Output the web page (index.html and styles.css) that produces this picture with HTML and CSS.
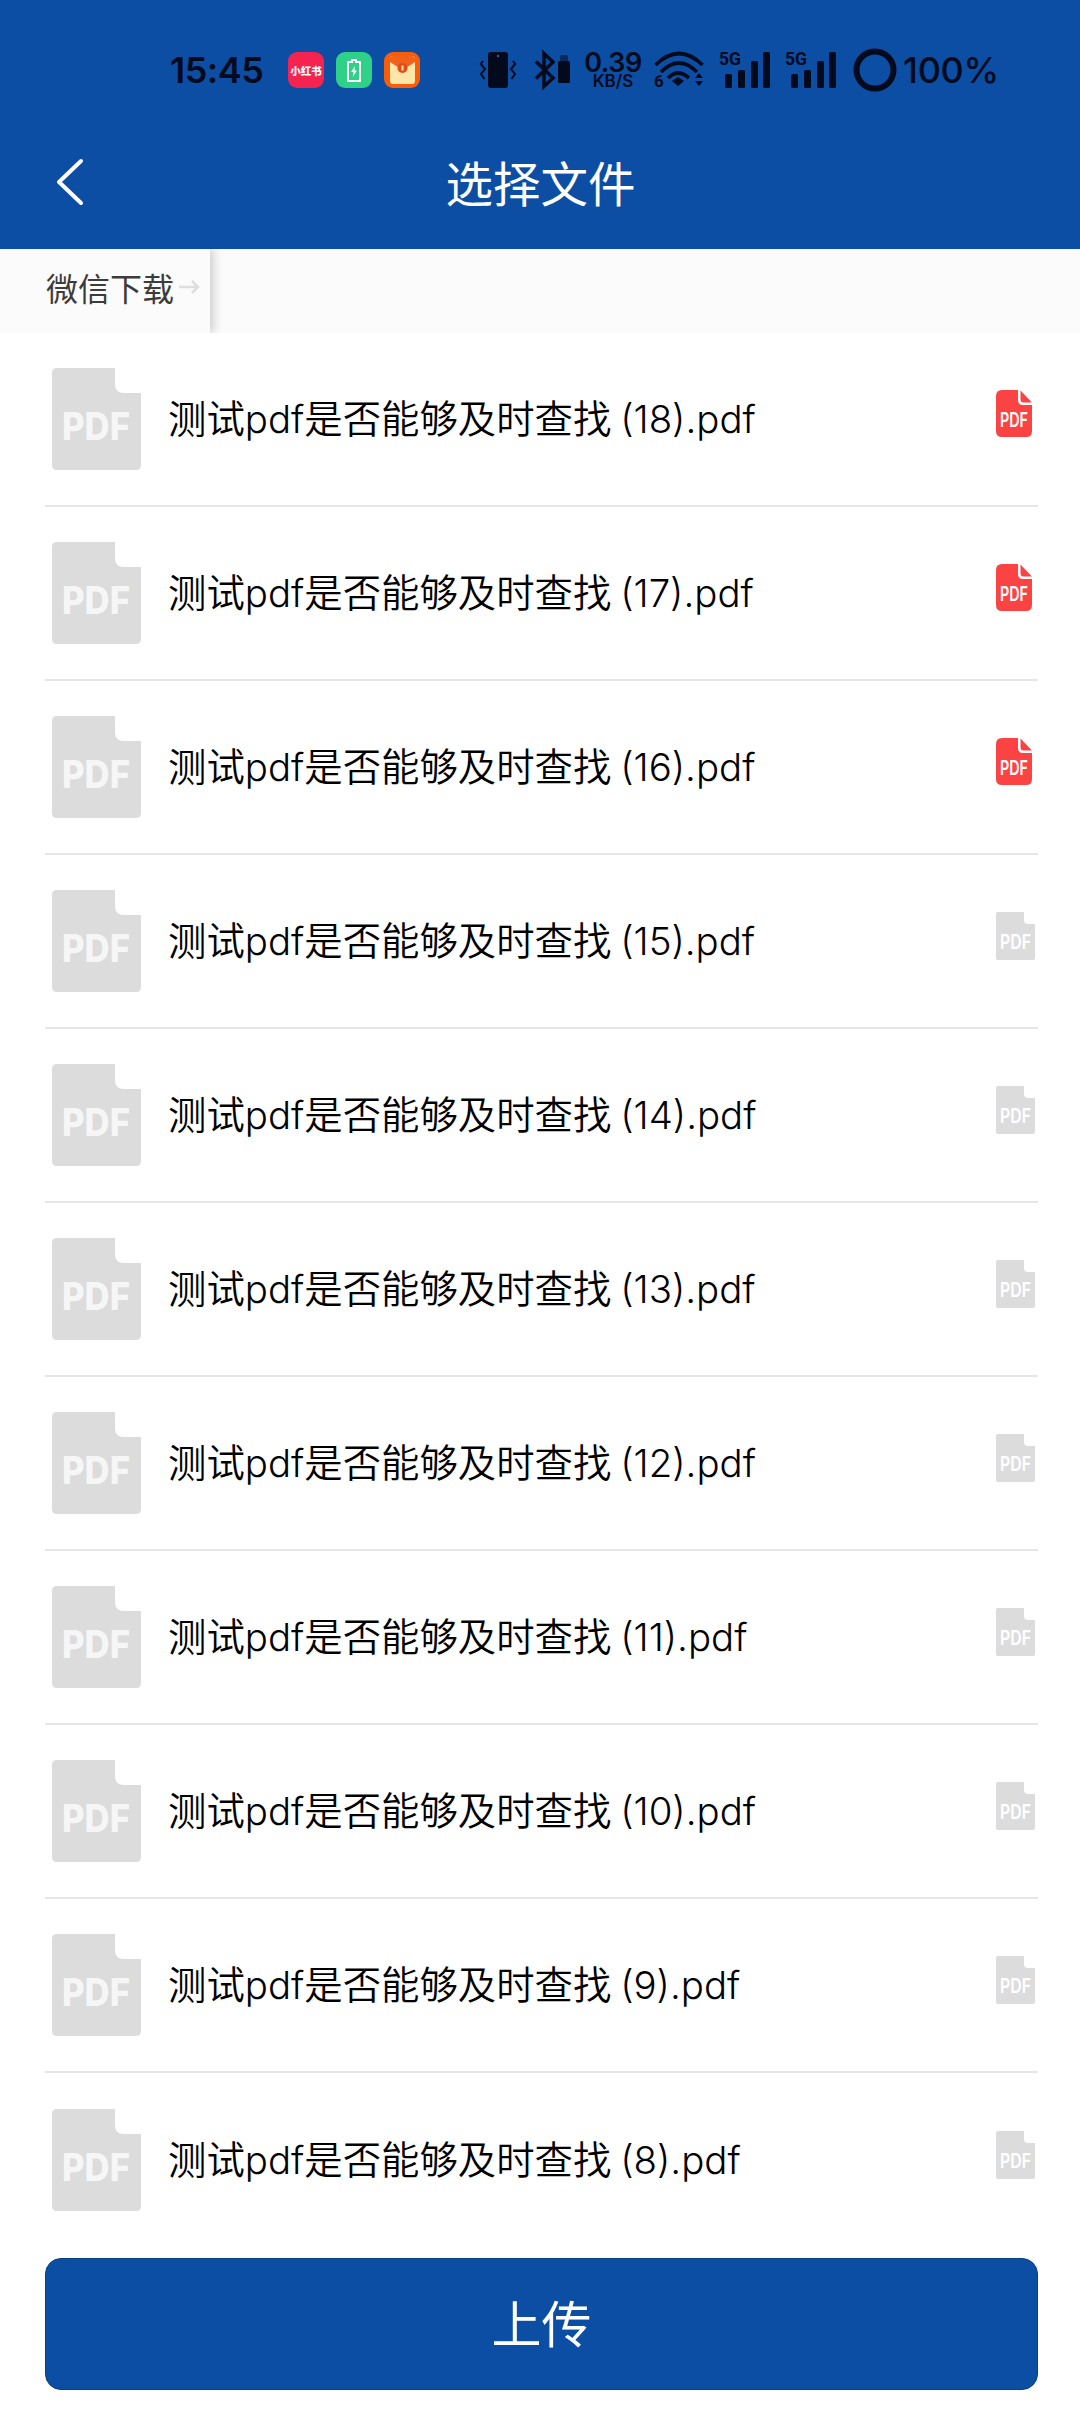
FILE: index.html
```html
<!DOCTYPE html>
<html lang="zh-CN">
<head>
<meta charset="utf-8">
<title>选择文件</title>
<link rel="stylesheet" href="styles.css">
</head>
<body>
<svg class="defs" width="0" height="0" aria-hidden="true">
  <symbol id="big-pdf" viewBox="0 0 89 102">
    <path class="grey" d="M5 0H63V16Q63 25 72 25H89V97Q89 102 84 102H5Q0 102 0 97V5Q0 0 5 0Z"/>
  </symbol>
  <symbol id="red-pdf" viewBox="0 0 39 48">
    <path class="red" d="M6 0H22V10Q22 15 27 15H36V41Q36 47 30 47H6Q0 47 0 41V6Q0 0 6 0Z"/>
    <path class="red" d="M24.500 0.500L36 12.500H27.500Q24.500 12.500 24.500 9.500Z"/>
  </symbol>
  <symbol id="grey-pdf" viewBox="0 0 39 48">
    <path class="grey" d="M2 0H28V8Q28 12 32 12H39V46Q39 48 37 48H2Q0 48 0 46V2Q0 0 2 0Z"/>
  </symbol>
  <symbol id="signal" viewBox="0 0 52 36">
    <rect x="6" y="22" width="7" height="14" rx="1.500"/>
    <rect x="19" y="18" width="7" height="18" rx="1.500"/>
    <rect x="32" y="9" width="7" height="27" rx="1.500"/>
    <rect x="44" y="0" width="7" height="36" rx="1.500"/>
  </symbol>
</svg>
<div class="screen">
  <header class="top">
    <div class="status">
      <span class="time">15:45</span>
      <div class="apps">
        <span class="app app-red">小红书</span>
        <span class="app app-green">
          <svg width="14" height="23" viewBox="0 0 14 23"><path d="M5 1H9V3H13V22H1V3H5Z" fill="none" stroke="#fff" stroke-width="2"/><path d="M8 7L4 13H6.500L5.700 18L10 11.500H7.500Z" fill="#fff"/></svg>
        </span>
        <span class="app app-orange">
          <svg width="25" height="28" viewBox="0 0 25 28"><rect width="25" height="28" rx="3" fill="#ffe6a8"/><path d="M0 3Q0 0 3 0H22Q25 0 25 3V6L12.500 14L0 6Z" fill="#f2611c"/><circle cx="12.500" cy="12" r="5" fill="#e54b17"/><rect x="11.500" y="9.500" width="2" height="5" fill="#ffe6a8"/></svg>
        </span>
      </div>
      <div class="sys">
        <svg class="ic-vib" width="36" height="36" viewBox="0 0 36 36"><rect x="8" y="0" width="20" height="36" rx="3" fill="#020a1c"/><circle cx="18" cy="4" r="1.200" fill="#3a5a90"/><path d="M3 9L0.800 12L5 17L1 22L4.500 27M33 9L35.200 12L31 17L35 22L31.500 27" fill="none" stroke="#020a1c" stroke-width="2"/></svg>
        <svg class="ic-bt" width="20" height="36" viewBox="0 0 20 36"><path d="M1 9.500L18 26L9 34.500V1.500L18 10L1 26.500" fill="none" stroke="#020a1c" stroke-width="3.500"/></svg>
        <svg class="ic-bat" width="12" height="28" viewBox="0 0 12 28"><rect x="0" y="6" width="12" height="22" rx="1.500" fill="#020a1c"/><path d="M2 6V2Q2 0 4 0H8Q10 0 10 2V6Z" fill="#0a2a5c"/></svg>
        <div class="speed"><span class="speed-num">0.39</span><span class="speed-unit">KB/S</span></div>
        <svg class="ic-wifi" width="50" height="38" viewBox="0 0 50 38">
          <path d="M1.500 14Q25 -9 48.500 14M7 21Q25 3 43 21M14 27Q24 17 35 27" fill="none" stroke="#020a1c" stroke-width="3.800"/>
          <path d="M18 30L24 26L30 30L24 35Z" fill="#020a1c"/>
          <path d="M41 27L45 22L49 27ZM41 30H49L45 35Z" fill="#020a1c"/>
          <text class="sig-txt" x="0" y="36" font-size="17">6</text>
        </svg>
        <svg class="ic-sig" width="52" height="36" viewBox="0 0 52 36">
          <use href="#signal" class="sig-bars"/>
          <text class="sig-txt" x="0" y="13" font-size="18" textLength="22" lengthAdjust="spacingAndGlyphs">5G</text>
        </svg>
        <svg class="ic-sig2" width="52" height="36" viewBox="0 0 52 36">
          <use href="#signal" class="sig-bars"/>
          <text class="sig-txt" x="0" y="13" font-size="18" textLength="22" lengthAdjust="spacingAndGlyphs">5G</text>
        </svg>
        <svg class="ic-ring" width="44" height="44" viewBox="0 0 44 44"><circle cx="22" cy="22" r="18.500" fill="none" stroke="#020a1c" stroke-width="6"/></svg>
        <span class="pct">100%</span>
      </div>
    </div>
    <nav class="nav">
      <svg class="back" width="32" height="50" viewBox="0 0 32 50"><path d="M28 4L6 25L28 46" fill="none" stroke="#fff" stroke-width="4" stroke-linecap="round" stroke-linejoin="round"/></svg>
      <h1 class="title">选择文件</h1>
    </nav>
  </header>
  <div class="crumbs">
    <div class="crumb"><span class="crumb-text">微信下载</span><svg width="22" height="14" viewBox="0 0 22 14"><path d="M1 7H20M14 1L20 7L14 13" fill="none" stroke="#dedede" stroke-width="2.500"/></svg></div>
  </div>
  <ul class="list">
    <li class="row"><svg class="thumb" width="89" height="102"><use href="#big-pdf"/><text class="pdf-big" x="10" y="72" textLength="68" lengthAdjust="spacingAndGlyphs">PDF</text></svg><span class="name">测试pdf是否能够及时查找 (18).pdf</span><svg class="mark" width="39" height="48"><use href="#red-pdf"/><text class="pdf-small" x="4" y="37" textLength="28" lengthAdjust="spacingAndGlyphs">PDF</text></svg></li>
    <li class="row"><svg class="thumb" width="89" height="102"><use href="#big-pdf"/><text class="pdf-big" x="10" y="72" textLength="68" lengthAdjust="spacingAndGlyphs">PDF</text></svg><span class="name">测试pdf是否能够及时查找 (17).pdf</span><svg class="mark" width="39" height="48"><use href="#red-pdf"/><text class="pdf-small" x="4" y="37" textLength="28" lengthAdjust="spacingAndGlyphs">PDF</text></svg></li>
    <li class="row"><svg class="thumb" width="89" height="102"><use href="#big-pdf"/><text class="pdf-big" x="10" y="72" textLength="68" lengthAdjust="spacingAndGlyphs">PDF</text></svg><span class="name">测试pdf是否能够及时查找 (16).pdf</span><svg class="mark" width="39" height="48"><use href="#red-pdf"/><text class="pdf-small" x="4" y="37" textLength="28" lengthAdjust="spacingAndGlyphs">PDF</text></svg></li>
    <li class="row"><svg class="thumb" width="89" height="102"><use href="#big-pdf"/><text class="pdf-big" x="10" y="72" textLength="68" lengthAdjust="spacingAndGlyphs">PDF</text></svg><span class="name">测试pdf是否能够及时查找 (15).pdf</span><svg class="mark" width="39" height="48"><use href="#grey-pdf"/><text class="pdf-small" x="4" y="37" textLength="31" lengthAdjust="spacingAndGlyphs">PDF</text></svg></li>
    <li class="row"><svg class="thumb" width="89" height="102"><use href="#big-pdf"/><text class="pdf-big" x="10" y="72" textLength="68" lengthAdjust="spacingAndGlyphs">PDF</text></svg><span class="name">测试pdf是否能够及时查找 (14).pdf</span><svg class="mark" width="39" height="48"><use href="#grey-pdf"/><text class="pdf-small" x="4" y="37" textLength="31" lengthAdjust="spacingAndGlyphs">PDF</text></svg></li>
    <li class="row"><svg class="thumb" width="89" height="102"><use href="#big-pdf"/><text class="pdf-big" x="10" y="72" textLength="68" lengthAdjust="spacingAndGlyphs">PDF</text></svg><span class="name">测试pdf是否能够及时查找 (13).pdf</span><svg class="mark" width="39" height="48"><use href="#grey-pdf"/><text class="pdf-small" x="4" y="37" textLength="31" lengthAdjust="spacingAndGlyphs">PDF</text></svg></li>
    <li class="row"><svg class="thumb" width="89" height="102"><use href="#big-pdf"/><text class="pdf-big" x="10" y="72" textLength="68" lengthAdjust="spacingAndGlyphs">PDF</text></svg><span class="name">测试pdf是否能够及时查找 (12).pdf</span><svg class="mark" width="39" height="48"><use href="#grey-pdf"/><text class="pdf-small" x="4" y="37" textLength="31" lengthAdjust="spacingAndGlyphs">PDF</text></svg></li>
    <li class="row"><svg class="thumb" width="89" height="102"><use href="#big-pdf"/><text class="pdf-big" x="10" y="72" textLength="68" lengthAdjust="spacingAndGlyphs">PDF</text></svg><span class="name">测试pdf是否能够及时查找 (11).pdf</span><svg class="mark" width="39" height="48"><use href="#grey-pdf"/><text class="pdf-small" x="4" y="37" textLength="31" lengthAdjust="spacingAndGlyphs">PDF</text></svg></li>
    <li class="row"><svg class="thumb" width="89" height="102"><use href="#big-pdf"/><text class="pdf-big" x="10" y="72" textLength="68" lengthAdjust="spacingAndGlyphs">PDF</text></svg><span class="name">测试pdf是否能够及时查找 (10).pdf</span><svg class="mark" width="39" height="48"><use href="#grey-pdf"/><text class="pdf-small" x="4" y="37" textLength="31" lengthAdjust="spacingAndGlyphs">PDF</text></svg></li>
    <li class="row"><svg class="thumb" width="89" height="102"><use href="#big-pdf"/><text class="pdf-big" x="10" y="72" textLength="68" lengthAdjust="spacingAndGlyphs">PDF</text></svg><span class="name">测试pdf是否能够及时查找 (9).pdf</span><svg class="mark" width="39" height="48"><use href="#grey-pdf"/><text class="pdf-small" x="4" y="37" textLength="31" lengthAdjust="spacingAndGlyphs">PDF</text></svg></li>
    <li class="row row-last"><svg class="thumb" width="89" height="102"><use href="#big-pdf"/><text class="pdf-big" x="10" y="72" textLength="68" lengthAdjust="spacingAndGlyphs">PDF</text></svg><span class="name">测试pdf是否能够及时查找 (8).pdf</span><svg class="mark" width="39" height="48"><use href="#grey-pdf"/><text class="pdf-small" x="4" y="37" textLength="31" lengthAdjust="spacingAndGlyphs">PDF</text></svg></li>
  </ul>
  <div class="foot"><button class="upload" type="button">上传</button></div>
</div>
</body>
</html>
```

FILE: styles.css
```css
* { box-sizing: border-box; }
html, body { margin: 0; padding: 0; background: #fff; }
body { font-family: Inter, "Noto Sans CJK SC", sans-serif; }
.defs { position: absolute; }
.screen { width: 1080px; height: 2412px; display: flex; flex-direction: column; overflow: hidden; }

.top { background: #0c4ea3; height: 249px; flex: none; display: flex; flex-direction: column; }
.status { height: 92px; padding: 48px 0 0 170px; display: flex; align-items: center; color: #020a1c; }
.time { width: 92px; font-size: 36px; font-weight: 600; line-height: 42px; letter-spacing: -0.5px; flex: none; white-space: nowrap; }
.apps { display: flex; gap: 12px; margin-left: 26px; }
.app { width: 36px; height: 36px; border-radius: 9px; display: flex; align-items: center; justify-content: center; overflow: hidden; }
.app-red { background: #f5234f; color: #fff; font-size: 10.500px; font-weight: 900; white-space: nowrap; font-family: "Noto Sans CJK SC", sans-serif; }
.app-green { background: #2fd088; }
.app-orange { background: #fa5d0a; }
.sys { display: flex; align-items: center; margin-left: 60px; height: 44px; }
.sys svg { flex: none; display: block; overflow: visible; }
.ic-bt { margin-left: 19px; }
.ic-bat { margin-left: 3px; margin-top: -2px; }
.speed { width: 58px; margin-left: 14px; display: flex; flex-direction: column; align-items: center; font-weight: 600; }
.speed-num { font-size: 27px; line-height: 22px; letter-spacing: -0.5px; }
.speed-unit { font-size: 17px; line-height: 15px; }
.ic-wifi { margin-left: 12px; }
.ic-sig { margin-left: 15px; }
.ic-sig2 { margin-left: 14px; }
.ic-ring { margin-left: 16px; }
.sig-bars { fill: #020a1c; }
.sig-txt { font-family: Roboto, sans-serif; font-weight: 700; fill: #020a1c; }
.pct { margin-left: 6px; font-size: 36px; font-weight: 500; line-height: 42px; letter-spacing: -0.3px; white-space: nowrap; }

.nav { flex: 1; position: relative; display: flex; align-items: center; justify-content: center; padding-top: 22px; }
.back { position: absolute; left: 53px; top: 65px; }
.title { margin: 0 0 0 1px; font-size: 47.500px; font-weight: 400; color: #fff; line-height: 60px; font-family: "Noto Sans CJK SC", sans-serif; }

.crumbs { height: 84px; background: #fbfbfb; flex: none; display: flex; overflow: hidden; }
.crumb { width: 210px; padding: 0 0 9px 46px; display: flex; align-items: center; gap: 4px; background: #fbfbfb; box-shadow: 3px 0 10px rgba(0, 0, 0, .2); }
.crumb-text { font-size: 32px; line-height: 40px; color: #3c3c3c; font-family: "Noto Sans CJK SC", sans-serif; white-space: nowrap; }

.list { list-style: none; margin: 0; padding: 0 42px 0 45px; flex: 1; min-height: 0; overflow: hidden; }
.row { height: 174px; display: flex; align-items: center; border-bottom: 2px solid #e6e6e6; padding-left: 7px; }
.row-last { border-bottom: 0; }
.thumb { flex: none; display: block; overflow: visible; }
.name { flex: 1; margin-left: 27px; font-size: 38.400px; word-spacing: -2px; line-height: 50px; color: #000; font-weight: 350; white-space: nowrap; font-family: Inter, "Noto Sans CJK SC", sans-serif; }
.mark { flex: none; display: block; margin: -10px 3px 0 0; overflow: visible; }
.grey { fill: #dcdcdc; }
.red { fill: #fb4344; }
.pdf-big { font-family: Inter, sans-serif; font-weight: 800; font-size: 38px; fill: #f6f6f6; }
.pdf-small { font-family: Inter, sans-serif; font-weight: 600; font-size: 20px; fill: #fff; }

.foot { flex: none; padding: 0 42px 22px 45px; }
.upload { display: block; width: 100%; height: 132px; border: 1px solid #0a3f7e; border-radius: 16px; background: #0c4ea3; color: #fff; font-size: 50px; font-family: "Noto Sans CJK SC", sans-serif; font-weight: 400; padding: 0 0 6px; }
```
